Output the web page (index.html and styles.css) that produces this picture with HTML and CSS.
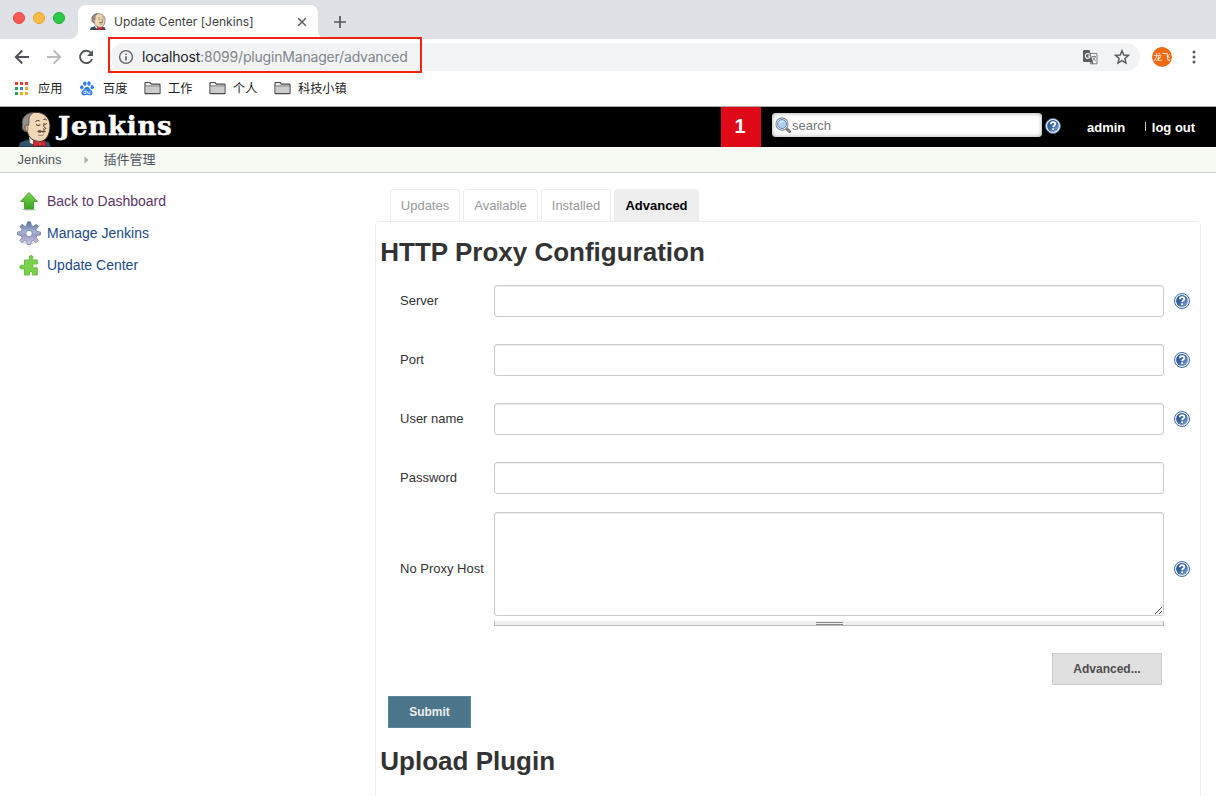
FILE: index.html
```
<!DOCTYPE html>
<html lang="zh-CN">
<head>
<meta charset="utf-8">
<title>Update Center [Jenkins]</title>
<link rel="stylesheet" href="styles.css">
</head>
<body>
<svg class="defs" aria-hidden="true">
  <defs>
    <linearGradient id="helpFill" x1="0" y1="0" x2="1" y2="1"><stop offset="0" stop-color="#1e4684"/><stop offset=".5" stop-color="#3d69a6"/><stop offset="1" stop-color="#8fb0d5"/></linearGradient>
    <linearGradient id="green" x1="0" y1="0" x2="0" y2="1"><stop offset="0" stop-color="#7bd653"/><stop offset="1" stop-color="#3da51c"/></linearGradient>
    <linearGradient id="steel" x1="0" y1="0" x2="0" y2="1"><stop offset="0" stop-color="#566f9b"/><stop offset=".45" stop-color="#a9b5d6"/><stop offset=".6" stop-color="#9a98c4"/><stop offset="1" stop-color="#cfd0e8"/></linearGradient>
    <symbol id="help" viewBox="0 0 16 16">
      <circle cx="8" cy="8" r="7.5" fill="#f4f7fb" stroke="#3f69a5" stroke-width="1"/><circle cx="8" cy="8" r="5.9" fill="url(#helpFill)"/>
      <path d="M5.8 6.2C5.8 4.700 6.800 4.100 8.100 4.100c1.400 0 2.200.8 2.200 1.800 0 1.500-2.100 1.600-2.200 3.200" fill="none" stroke="#fff" stroke-width="1.700"/><rect x="7.200" y="10.300" width="1.800" height="1.800" fill="#fff"/>
    </symbol>
    <symbol id="folder" viewBox="0 0 17 14">
      <path d="M1 12.200V2.200Q1 1.500 1.700 1.500H6L7.400 3.200H15.300Q16 3.200 16 4V12.200Q16 12.700 15.500 12.700H1.500Q1 12.700 1 12.200Z" fill="#eee" stroke="#48484b" stroke-width="1.200"/>
      <path d="M1.700 5H15.300V12H1.700Z" fill="#ccc"/><path d="M1 4.900H16" stroke="#66666a" stroke-width=".8"/>
    </symbol>
    <symbol id="butler" viewBox="0 0 34 36">
      <path d="M.5 36L2 31.500 10 28.500 17 33 27 30 31 31 32.500 36Z" fill="#2f5468" stroke="#1b2b35"/>
      <path d="M11 26L12 32 20 35 27 31Z" fill="#f3eee8"/>
      <path d="M4.500 14C3 6.500 9 1.300 18 1.300 26.500 1.300 32 7.500 32 14.500 32 24 28 30 22 30.500 15 30 10.500 27 9.500 21 6 21 3 17.500 4.500 14Z" fill="#f0d7b5" stroke="#3a3029"/>
      <path d="M4.500 14C3 7.500 7.500 2 15.500 1.500 11.500 4 10.500 7.500 11 11L10.500 14.500 8.500 13.500 6.500 15.500 8.500 20.500C5.500 20.500 3.500 17 4.500 14Z" fill="#92908b" stroke="#4b4844" stroke-width=".8"/>
      <path d="M7 15.500Q7 13.500 9.200 14.500 10.500 16.500 9.500 20.500 7 20 7 15.500Z" fill="#e2b995" stroke="#6c5542" stroke-width=".7"/>
      <path d="M17.500 10.500Q19.500 8.800 21.500 9.800M25.500 8.500Q27.500 7.500 28.800 9M18 13.500Q20 15.500 22.300 13.800M25.500 12.800Q27.300 14 28.800 12.500M25.500 13.500Q25.300 15.500 27.800 17.500 27 18.800 25 18" fill="none" stroke="#3c2d25" stroke-width="1"/>
      <path d="M19 20.500Q21.500 18.500 23.800 20 26 18.800 28 20.500 25.800 22.300 23.800 21 21 22.500 19 20.500Z" fill="#5b4537"/>
      <path d="M20 24Q23.500 25.500 26 23.500" fill="none" stroke="#997663" stroke-width=".9"/>
      <path d="M15.500 29.500L21 32 27 29.500 28 36 22.500 34 15.500 36Z" fill="#e02630" stroke="#6b1519" stroke-width=".7"/><circle cx="22" cy="32.800" r="1.900" fill="#ef3b42" stroke="#961b20" stroke-width=".5"/>
    </symbol>
  </defs>
</svg>

<div class="tabstrip">
  <div class="lights"><i class="red"></i><i class="yellow"></i><i class="green"></i></div>
  <div class="tab">
    <svg class="favicon" width="16" height="17"><use href="#butler"/></svg>
    <span class="tab-title">Update Center [Jenkins]</span>
    <svg class="tab-close" width="10" height="10" viewBox="0 0 10 10"><path d="M1.200 1.200L8.800 8.800M8.800 1.200L1.200 8.800" stroke="#5a5d61" stroke-width="1.500"/></svg>
  </div>
  <svg class="new-tab" width="14" height="14" viewBox="0 0 14 14"><path d="M7 1V13M1 7H13" stroke="#55585c" stroke-width="1.700"/></svg>
</div>

<div class="toolbar">
  <svg class="nav-icon" width="16" height="16" viewBox="0 0 16 16"><path d="M15 8H2M8.300 1.500L1.800 8l6.500 6.500" fill="none" stroke="#4f5358" stroke-width="1.900"/></svg>
  <svg class="nav-icon" width="16" height="16" viewBox="0 0 16 16"><path d="M1 8H14M7.700 1.500L14.200 8l-6.500 6.500" fill="none" stroke="#babcbf" stroke-width="1.900"/></svg>
  <svg class="nav-icon" width="16" height="16" viewBox="0 0 16 16"><path d="M13.200 4.200A6.200 6.200 0 1 0 14.100 10" fill="none" stroke="#4f5358" stroke-width="1.900"/><path d="M15 1V7H9Z" fill="#4f5358"/></svg>
  <div class="omnibox">
    <svg class="info" width="16" height="16" viewBox="0 0 16 16"><circle cx="8" cy="8" r="6.400" fill="none" stroke="#5f6368" stroke-width="1.400"/><path d="M8 7.200V11.500M8 4.400V6" stroke="#5f6368" stroke-width="1.600"/></svg>
    <span class="url"><b>localhost</b>:8099/pluginManager/advanced</span>
    <svg class="translate" width="15" height="15" viewBox="0 0 15 15"><path d="M5.500 3.500H14V13.800H7.500Z" fill="#f5f5f5" stroke="#7a7d81"/><path d="M0 1Q0 0 1 0H6.500L10 12H1Q0 12 0 11Z" fill="#5b5f64"/><path d="M6.700 4.500A2.400 2.400 0 1 0 6.800 7.200V6H4.800" fill="none" stroke="#fff" stroke-width="1.100"/><path d="M7.700 12L10 14.500V12Z" fill="#5b5f64"/><path d="M9 6.500H13M11.500 5.500V6.500M12.400 6.800Q11.800 9 9.700 10.600M9.800 7.500Q11 10 12.800 11" fill="none" stroke="#777b80" stroke-width=".9"/></svg>
    <svg class="star" width="16" height="16" viewBox="0 0 16 16"><path d="M8 1.700L9.800 6 14.500 6.400 10.900 9.500 12 14 8 11.600 4 14 5.100 9.500 1.500 6.400 6.200 6Z" fill="none" stroke="#55595e" stroke-width="1.400"/></svg>
  </div>
  <div class="avatar">龙飞</div>
  <svg class="menu" width="4" height="14" viewBox="0 0 4 14"><g fill="#55595e"><circle cx="2" cy="2" r="1.500"/><circle cx="2" cy="7" r="1.500"/><circle cx="2" cy="12" r="1.500"/></g></svg>
  <div class="url-highlight"></div>
</div>

<div class="bookmarks">
  <div class="bookmark apps"><svg width="13" height="13" viewBox="0 0 13 13"><path d="M0 0h3v3H0zM5 0h3v3H5zM10 0h3v3h-3z" fill="#e34133"/><path d="M0 5h3v3H0z" fill="#2d9f58"/><path d="M5 5h3v3H5z" fill="#3c80ed"/><path d="M10 5h3v3h-3zM5 10h3v3H5zM10 10h3v3h-3z" fill="#efad28"/><path d="M0 10h3v3H0z" fill="#2d9f58"/></svg><span>应用</span></div>
  <div class="bookmark baidu"><svg width="14" height="15" viewBox="0 0 14 15"><g fill="#2d7df0"><ellipse cx="1.800" cy="6.300" rx="1.700" ry="2.100"/><ellipse cx="4.900" cy="2.600" rx="1.700" ry="2.200"/><ellipse cx="9" cy="2.500" rx="1.700" ry="2.200"/><ellipse cx="12.200" cy="6.200" rx="1.700" ry="2.100"/><path d="M7 5.700c2 0 2.500 2.200 4.200 3.600 2.400 2.100 1.300 5-1 5.100-1.400 0-1.800-.4-3.200-.4s-2 .4-3.300.4c-2.300-.2-3.100-3.100-.9-5.100C4.500 8 5 5.700 7 5.700Z"/></g><path d="M6 8.700V12.500H4.800Q3.600 12.500 3.600 11.400T4.800 10.300H6M7.700 10.200V12.500H10V10.200" fill="none" stroke="#fff" stroke-width=".8"/></svg><span>百度</span></div>
  <div class="bookmark work"><svg width="17" height="14"><use href="#folder"/></svg><span>工作</span></div>
  <div class="bookmark personal"><svg width="17" height="14"><use href="#folder"/></svg><span>个人</span></div>
  <div class="bookmark town"><svg width="17" height="14"><use href="#folder"/></svg><span>科技小镇</span></div>
</div>

<header class="header">
  <a class="logo"><svg width="34" height="36"><use href="#butler"/></svg><span>Jenkins</span></a>
  <div class="alerts">1</div>
  <div class="search"><svg width="17" height="17" viewBox="0 0 17 17"><path d="M11.500 11.500L14.500 14.500" stroke="#777" stroke-width="3" stroke-linecap="round"/><circle cx="7" cy="7" r="6.100" fill="#f4f7fa" stroke="#858a90" stroke-width="1.100"/><circle cx="7" cy="7" r="4.500" fill="#b3d0f0" stroke="#6088bb" stroke-width="1"/><path d="M4.500 6Q5.200 4.200 8 4.300" fill="none" stroke="#e2effc" stroke-width="1.200"/></svg><span>search</span></div>
  <svg class="search-help" width="16" height="16"><use href="#help"/></svg>
  <b class="admin">admin</b><span class="logout"><i></i><b>log out</b></span>
</header>

<nav class="breadcrumbs"><span>Jenkins</span><svg width="5" height="8" viewBox="0 0 5 8"><path d="M.5 .5L4.500 4 .5 7.500Z" fill="#aaa"/></svg><span class="crumb">插件管理</span></nav>

<div class="page">
  <aside class="side">
    <a class="task visited"><svg width="24" height="24" viewBox="0 0 24 24"><ellipse cx="12" cy="20.500" rx="7" ry="1" fill="#ccc"/><path d="M12 3.500L20.500 12.500H16.500V20H7.500V12.500H3.500Z" fill="url(#green)" stroke="#469f2b" stroke-width=".9"/></svg>Back to Dashboard</a>
    <a class="task"><svg width="24" height="24" viewBox="0 0 24 24"><ellipse cx="12" cy="22" rx="7" ry="1.500" fill="#ddd"/><path fill-rule="evenodd" d="M10.500 .8H13.500L14.500 4.700 16.500 5.500 19.300 3.200 21.500 5.500 19 8.500 20 10.500 23.500 11V14L20 14.500 19 16.700 21.200 19.500 19 21.700 16.300 19.500 14.300 20.300 13.700 23.500H10.500L9.700 20.300 7.700 19.500 5 21.700 2.800 19.500 5 16.700 4 14.500 .5 14V11L4 10.500 5 8.300 2.900 5.500 5.200 3.300 8 5.500 9.500 4.700ZM12 9.200A3.200 3.200 0 1 0 12 15.600 3.200 3.200 0 1 0 12 9.200Z" fill="url(#steel)" stroke="#7581a6" stroke-width=".8"/></svg>Manage Jenkins</a>
    <a class="task"><svg width="24" height="24" viewBox="0 0 24 24"><path d="M7.500 7H12.500Q13 6.300 12.300 5.500 11.300 2.800 14 2.600 16.700 2.800 15.700 5.500 15 6.300 15.500 7H20.300V11Q19.500 11.500 18.500 10.800 15.500 10 15.500 13 15.700 15.600 18.500 14.700 19.700 14 20.300 14.800V22H15.500Q15 21.300 15.500 20.300 15.800 18.300 14 18.300 12 18.400 12.500 20.300 13 21.300 12.500 22H7.500V16Q7 15.300 5.700 16 3 16.500 2.700 14 3 11.500 5.700 12.200 7 12.900 7.500 12Z" fill="#79d24c" stroke="#5db638" stroke-width=".9"/></svg>Update Center</a>
  </aside>

  <main class="main">
    <div class="tabs"><a>Updates</a><a class="available">Available</a><a class="installed">Installed</a><a class="active">Advanced</a></div>
    <section class="panel">
      <h1>HTTP Proxy Configuration</h1>
      <div class="row"><label>Server</label><div class="field"></div><svg width="16" height="16"><use href="#help"/></svg></div>
      <div class="row"><label>Port</label><div class="field"></div><svg width="16" height="16"><use href="#help"/></svg></div>
      <div class="row"><label>User name</label><div class="field"></div><svg width="16" height="16"><use href="#help"/></svg></div>
      <div class="row password"><label>Password</label><div class="field"></div></div>
      <div class="row area-row"><label>No Proxy Host</label>
        <div class="area-wrap">
          <div class="field area"><svg width="9" height="9" viewBox="0 0 9 9"><path d="M1 8L8 1M5 8L8 5" stroke="#444" stroke-width=".9"/></svg></div>
          <div class="grip"><i></i></div>
        </div>
        <svg width="16" height="16"><use href="#help"/></svg></div>
      <div class="advanced-row"><div class="button">Advanced...</div></div>
      <div class="button submit">Submit</div>
      <h1 class="upload">Upload Plugin</h1>
    </section>
  </main>
</div>
</body>
</html>
```
FILE: styles.css
```
* { box-sizing: border-box; }
body { margin: 0; width: 1216px; height: 796px; overflow: hidden; background: #fff; color: #333; font: 13px "Liberation Sans", "Noto Sans CJK SC", sans-serif; }
svg { display: block; flex: none; }
.defs { position: absolute; width: 0; height: 0; }

.tabstrip { display: flex; height: 39px; background: #dee1e6; }
.lights { display: flex; gap: 8px; padding: 12px 0 0 13px; width: 78px; flex: none; }
.lights i { width: 12px; height: 12px; border-radius: 50%; }
.lights .red { background: #fc5753; border: 1px solid #e4443f; }
.lights .yellow { background: #fdbc40; border: 1px solid #e0a02f; }
.lights .green { background: #28ca48; border: 1px solid #1bad30; }
.tab { display: flex; align-items: center; position: relative; width: 240px; height: 34px; margin-top: 5px; padding: 0 11px 1px 12px; background: #fff; border-radius: 8px 8px 0 0; }
.tab::before, .tab::after { content: ""; position: absolute; bottom: 0; width: 8px; height: 8px; }
.tab::before { left: -8px; background: radial-gradient(circle at 0 0, #dee1e6 7.5px, #fff 8.5px); }
.tab::after { right: -8px; background: radial-gradient(circle at 100% 0, #dee1e6 7.5px, #fff 8.5px); }
.tab-title { margin: -1px 0 0 8px; color: #3c4043; font: 12px Inter, sans-serif; letter-spacing: .04px; white-space: nowrap; }
.tab-close { margin-left: auto; }
.new-tab { margin: 15px 0 0 15px; }

.toolbar { display: flex; align-items: center; position: relative; height: 35px; padding-left: 14px; }
.nav-icon { margin-right: 16px; }
.omnibox { display: flex; align-items: center; width: 1030px; height: 28px; margin-top: 1px; padding: 0 10px 0 8px; border-radius: 14px; background: #f1f3f4; }
.url { margin: -1px 0 0 8px; color: #80868b; font: 14px Inter, sans-serif; letter-spacing: -.19px; white-space: nowrap; }
.url b { color: #202124; font-weight: 400; }
.translate { margin-left: auto; margin-right: 16px; }
.avatar { width: 20px; height: 20px; margin-left: 12px; border-radius: 50%; background: #ed6b12; color: #fff; font: 8.5px/19px "Noto Sans CJK SC", sans-serif; text-align: center; white-space: nowrap; }
.menu { margin-left: 20px; }
.url-highlight { position: absolute; left: 108px; top: -2px; width: 314px; height: 36px; border: 2px solid #f3230f; }

.bookmarks { display: flex; height: 33px; padding: 0 0 4px 15px; border-bottom: 1px solid #a9abad; }
.bookmark { display: flex; align-items: center; color: #222; font: 12.2px "Noto Sans CJK SC", sans-serif; white-space: nowrap; }
.bookmark svg { margin-right: 7px; }
.apps { width: 65px; }
.apps svg { margin-right: 10px; }
.baidu { width: 64px; }
.baidu svg { margin-right: 9px; }
.work, .personal { width: 65px; }

.header { display: flex; height: 40px; background: #000; color: #fff; }
.logo { display: flex; width: 721px; padding: 4px 0 0 18px; overflow: hidden; }
.logo span { margin-left: 6px; font: bold 26px/30px "DejaVu Serif", serif; letter-spacing: .75px; -webkit-text-stroke: .5px #fff; }
.alerts { width: 40px; padding-right: 2px; background: #e00918; font: bold 20px/38px "Liberation Sans", sans-serif; text-align: center; }
.search { display: flex; width: 270px; height: 24px; margin: 6px 3px 0 11px; padding: 4px 0 0 3px; border-radius: 4px; background: #fff; box-shadow: inset 0 0 4px #999; color: #757575; font-size: 13px; line-height: 17px; }
.search-help { margin-top: 11px; }
.admin { margin-left: 26px; line-height: 41px; }
.logout { display: flex; margin-left: 20px; line-height: 41px; white-space: nowrap; }
.logout i { width: 1px; height: 9px; margin: 15px 5.5px 0 0; background: #ccc; }

.breadcrumbs { display: flex; align-items: center; height: 26px; padding-left: 17.5px; border-bottom: 1px solid #d3d7cf; background: #f6faf2; color: #4d545d; }
.breadcrumbs svg { margin: 1px 15px 0 22px; }
.crumb { margin-top: -2px; }

.page { display: flex; height: 623px; }
.side { width: 375px; padding: 16px 0 0 17px; flex: none; }
.task { display: flex; align-items: center; height: 24px; margin-bottom: 8px; gap: 6px; color: #204a87; font-size: 14px; }
.task.visited { color: #5c3566; }
.main { width: 826px; padding-top: 16px; }
.tabs { display: flex; height: 32px; padding-left: 15px; gap: 3px; line-height: 32px; }
.tabs a { width: 70px; border: 1px solid #eee; border-bottom: 0; border-radius: 4px 4px 0 0; color: #999; text-align: center; }
.tabs .available { width: 75px; }
.tabs .active { width: 85px; background: #eee; color: #000; font-weight: 700; }
.panel { height: 580px; padding: 16px 9px 0 4px; border: 1px solid #eee; border-radius: 4px 4px 0 0; }
h1 { margin: 0 0 18px; padding-left: .3px; font-size: 26px; line-height: 29px; }
.row { display: flex; align-items: center; height: 32px; margin-bottom: 27px; padding-left: 20px; }
.row label { width: 94px; padding-bottom: 2px; flex: none; white-space: nowrap; }
.field { width: 670px; height: 32px; border: 1px solid #ccc; border-radius: 3px; background: #fff; box-shadow: inset 0 1px 1px rgba(0,0,0,.075); }
.row > svg { margin-left: 10px; }
.row.password { margin-bottom: 18px; }
.row.area-row { height: 114px; margin-bottom: 27px; }
.area { display: flex; align-items: flex-end; justify-content: flex-end; height: 104px; }
.grip { height: 5px; margin-top: 5px; padding-top: 1px; border: 1px solid #bbb; border-top: 0; background: #eee; }
.grip i { display: block; width: 27px; height: 3px; margin: 0 auto; border: solid #888; border-width: 1px 0; }
.advanced-row { display: flex; justify-content: flex-end; padding-right: 29px; }
.button { width: 110px; height: 32px; border: 1px solid #ccc; background: #e0e0e0; color: #4d4d4d; font-size: 12px; font-weight: 700; line-height: 30px; text-align: center; }
.submit { width: 83px; margin: 11px 0 19px 8px; border-color: #5788a0; background: #4b758b; color: #eee; }
```
